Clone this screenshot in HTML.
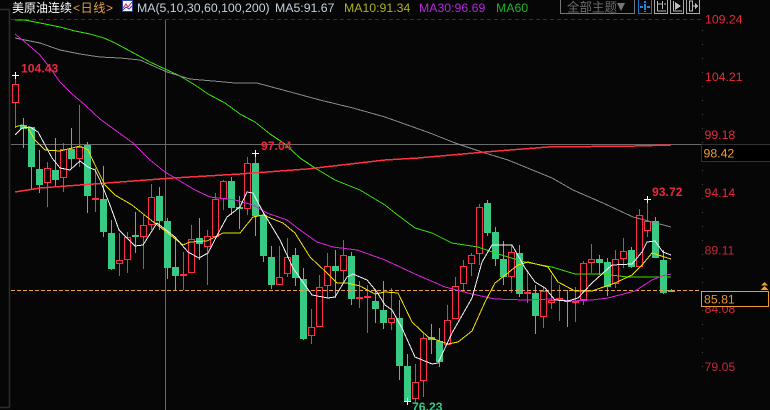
<!DOCTYPE html>
<html><head><meta charset="utf-8"><style>
html,body{margin:0;padding:0;background:#060606;width:770px;height:410px;overflow:hidden}
svg{display:block;font-family:"Liberation Sans","Noto Sans CJK SC",sans-serif}
</style></head><body>
<svg width="770" height="410" viewBox="0 0 770 410" xmlns="http://www.w3.org/2000/svg">
<rect width="770" height="410" fill="#060606"/>
<path d="M0 9.5H9.5V407M0 407.5H10" fill="none" stroke="#2c2c2c" stroke-width="1.6"/>
<path d="M11 19.5H702" stroke="#333" stroke-width="1" stroke-dasharray="4 3" shape-rendering="crispEdges"/>
<g shape-rendering="crispEdges">
<path d="M165.5 20V410" stroke="#666" stroke-width="1"/>
<path d="M11 144.5H701" stroke="#6a6a6a" stroke-width="1"/>
<!-- green wicks -->
<path fill="none" stroke="#38c985" stroke-width="1" d="M23.5 118V148M31.5 127V189M39.5 150V193M55.5 138V187M71.5 128V168M87.5 142V213M103.5 166V237M111.5 220V270M135.5 212V253M159.5 187V230M167.5 218V279M175.5 238V290M199.5 218V260M231.5 177V215M239.5 196V229M255.5 153V236M263.5 212V262M271.5 246V289M295.5 248V286M303.5 268V340M335.5 250V298M351.5 252V305M375.5 290V323M383.5 281V329M399.5 300V380M407.5 354V401M431.5 324V354M439.5 328V367M487.5 200V236M495.5 227V266M503.5 241V285M519.5 245V297M535.5 285V334M567.5 290V327M599.5 255V275M607.5 258V296M631.5 247V268M655.5 217V258M663.5 250V294M671.5 289V292"/>
<!-- green bodies -->
<path fill="#38c985" d="M20 125h7v4h-7zM28 127h7v40h-7zM36 169h7v16h-7zM52 170h7v10h-7zM68 149h7v10h-7zM84 145h7v51h-7zM100 199h7v33h-7zM108 233h7v36h-7zM132 235h7v2h-7zM156 196h7v25h-7zM164 221h7v47h-7zM172 267h7v9h-7zM196 238h7v6h-7zM228 181h7v27h-7zM236 207h7v2h-7zM252 163h7v53h-7zM260 215h7v41h-7zM268 257h7v28h-7zM292 255h7v23h-7zM300 279h7v60h-7zM332 266h7v5h-7zM348 256h7v43h-7zM372 301h7v8h-7zM380 310h7v13h-7zM396 318h7v48h-7zM404 366h7v35h-7zM428 337h7v3h-7zM436 341h7v21h-7zM484 203h7v30h-7zM492 232h7v27h-7zM500 259h7v18h-7zM516 253h7v41h-7zM532 293h7v23h-7zM564 300h7v2h-7zM596 259h7v4h-7zM604 262h7v25h-7zM628 250h7v17h-7zM652 221h7v37h-7zM660 260h7v33h-7zM668 290h7v2h-7z"/>
<!-- red wicks -->
<path fill="none" stroke="#ff2d4c" stroke-width="1" d="M15.5 75V84M15.5 103V128M47.5 162V168M47.5 183V207M63.5 143V149M63.5 178V192M79.5 105V147M79.5 159V167M95.5 168V212M119.5 233V260M119.5 264V276M127.5 232V237M127.5 260V273M143.5 215V225M143.5 237V269M151.5 184V197M151.5 225V230M183.5 252V290M191.5 225V239M207.5 230V236M207.5 247V285M215.5 193V199M223.5 180V181M223.5 199V210M247.5 157V163M247.5 209V215M279.5 246V277M287.5 238V257M287.5 274V277M311.5 309V327M311.5 336V344M319.5 275V287M327.5 253V266M327.5 286V298M343.5 240V255M343.5 271V283M359.5 281V308M367.5 285V296M367.5 298V333M391.5 288V318M391.5 323V330M415.5 364V382M415.5 399V403M423.5 332V338M423.5 381V397M447.5 305V320M455.5 277V286M463.5 260V266M463.5 284V290M471.5 253V255M471.5 264V276M479.5 204V207M479.5 254V265M511.5 245V252M511.5 277V293M527.5 270V303M543.5 287V291M543.5 317V328M551.5 275V300M551.5 303V309M559.5 285V321M575.5 287V322M583.5 261V263M583.5 300V305M591.5 244V259M591.5 263V273M615.5 250V259M615.5 284V288M623.5 238V251M623.5 259V268M639.5 209V215M647.5 199V221M647.5 231V237"/>
<!-- red bodies -->
<path fill="#060606" stroke="#ff2d4c" stroke-width="1" d="M12.5 84.5h6v18h-6zM44.5 168.5h6v14h-6zM60.5 149.5h6v28h-6zM76.5 147.5h6v11h-6zM116.5 260.5h6v3h-6zM124.5 237.5h6v22h-6zM140.5 225.5h6v11h-6zM148.5 197.5h6v27h-6zM188.5 239.5h6v33h-6zM204.5 236.5h6v10h-6zM212.5 199.5h6v37h-6zM220.5 181.5h6v17h-6zM244.5 163.5h6v45h-6zM276.5 277.5h6v7h-6zM284.5 257.5h6v16h-6zM308.5 327.5h6v8h-6zM316.5 287.5h6v39h-6zM324.5 266.5h6v19h-6zM340.5 255.5h6v15h-6zM364.5 296.5h6v1h-6zM388.5 318.5h6v4h-6zM412.5 382.5h6v16h-6zM420.5 338.5h6v42h-6zM444.5 320.5h6v24h-6zM452.5 286.5h6v32h-6zM460.5 266.5h6v17h-6zM468.5 255.5h6v8h-6zM476.5 207.5h6v46h-6zM508.5 252.5h6v24h-6zM540.5 291.5h6v25h-6zM548.5 300.5h6v2h-6zM580.5 263.5h6v36h-6zM588.5 259.5h6v3h-6zM612.5 259.5h6v24h-6zM620.5 251.5h6v7h-6zM636.5 215.5h6v51h-6zM644.5 221.5h6v9h-6z"/>
<!-- red dojis -->
<path fill="#ff2d4c" d="M92 198h7v2h-7zM180 274h7v2h-7zM356 297h7v2h-7zM524 292h7v2h-7zM556 298h7v2h-7zM572 301h7v2h-7z"/>
<!-- dashed price line -->
<path d="M11 290.5H701" stroke="#e8a24a" stroke-width="1" stroke-dasharray="4 2"/>
</g>
<!-- MA lines -->
<g fill="none" stroke-linejoin="round" shape-rendering="crispEdges">
<polyline stroke="#35e000" stroke-width="1" points="15,20 25,20 45,24 60,27 75,31 90,34 104,38 115,43 130,51 150,62 165,69 180,76 195,85 208,94 225,103 240,114 255,122 270,134 285,144 300,158 315,168 335,180 360,190 375,199 385,205 395,213 415,228 432,233 452,243 478,247 498,254 525,262 552,267 575,274 602,274 628,277 652,277 671,277"/>
<polyline stroke="#8a8a8a" stroke-width="1" points="15,38 25,40 40,43 60,50 80,54 100,57 120,58 140,60 167,72 190,79 213,81 235,83 257,83 283,90 320,100 353,108 385,117 430,133 455,143 485,153 508,160 552,178 573,190 603,203 633,217 671,227"/>
<polyline stroke="#e020e0" stroke-width="1" points="15,34 25,42 40,55 50,68 60,82 72,94 85,105 100,119 115,130 133,143 150,160 165,172 175,178 195,190 210,197 235,200 253,205 267,213 287,220 300,230 317,242 333,247 357,250 385,260 415,274 445,287 472,294 495,299 525,300 552,299 572,301 592,300 608,298 635,291 652,280 662,276 671,274"/>
<polyline stroke="#ff3040" stroke-width="1.5" points="15,192 40,188 107,183 173,178 240,174 307,169 385,160 418,158 485,152 548,147 635,146 671,145"/>
<polyline stroke="#f0e000" stroke-width="1" points="15,127 22,125 28,128 35,140 45,150 60,151 80,146 88,150 95,165 105,185 115,195 132,205 147,217 160,227 183,245 190,242 207,241 223,233 240,233 253,217 263,215 283,223 295,233 310,257 327,273 337,283 347,283 360,286 375,294 385,292 398,293 412,322 428,337 448,344 458,342 472,331 485,302 495,283 518,265 528,262 548,267 558,282 575,291 592,291 615,283 632,275 642,265 652,253 671,259"/>
<polyline stroke="#f4f4f4" stroke-width="1" points="15,135 22,128 30,127 38,132 45,145 52,158 60,168 70,170 80,161 88,167 95,170 100,180 104,190 110,205 119,230 135,246 143,245 157,223 175,237 188,252 199,258 208,253 220,230 227,217 240,207 247,192 253,193 263,212 280,240 293,268 312,295 328,298 335,297 347,277 353,274 367,280 377,292 385,305 392,310 402,328 415,357 432,364 438,363 452,333 472,298 482,262 492,245 512,245 525,268 535,282 545,288 555,300 568,301 578,298 592,283 612,265 632,264 642,252 647,242 655,241 663,252 671,255"/>
</g>
<!-- crosses -->
<path shape-rendering="crispEdges" fill="none" stroke="#fff" stroke-width="1" d="M12 75.5h7M15.5 72v7M252 153.5h7M255.5 150v7M644 199.5h7M647.5 196v7M404 401.5h7M407.5 398v7"/>
<!-- chart labels -->
<g font-size="12.2" fill="#e8283f" font-weight="bold">
<text x="21" y="72.5">104.43</text>
<text x="261" y="150">97.04</text>
<text x="652" y="196">93.72</text>
</g>
<text x="412" y="411" font-size="12.2" fill="#38c985" font-weight="bold">76.23</text>
<!-- axis ticks -->
<path stroke="#444" stroke-width="1" stroke-dasharray="1 13" d="M702.5 30V380"/>
<!-- axis labels -->
<g font-size="12.3" fill="#e8283f">
<text x="705" y="23.5">109.24</text>
<text x="705" y="81">104.21</text>
<text x="704.5" y="139">99.18</text>
<text x="704.5" y="197">94.14</text>
<text x="704.5" y="254.5" fill="#c8253c">89.11</text>
<text x="704.5" y="313" fill="#d42840">84.08</text>
<text x="704.5" y="371" fill="#c8253c">79.05</text>
</g>
<rect x="701.5" y="144.5" width="69" height="17" fill="#000" stroke="#333"/>
<text x="703.5" y="157.5" font-size="12.3" fill="#f0a030">98.42</text>
<rect x="701.5" y="291.5" width="67" height="15" fill="#000" stroke="#f09a30"/>
<text x="704" y="303.5" font-size="12.3" fill="#e8952f">85.81</text>
<path fill="#f0a030" d="M764.5 282l3.5 3.5h-7zM764.5 286l4 4h-8z"/>
<!-- header -->
<text x="12" y="12" font-size="12" fill="#ffffff">美原油连续</text>
<text x="73" y="12" font-size="12" fill="#e6a04a" textLength="40">&lt;日线&gt;</text>
<rect x="122.5" y="0.5" width="10" height="11" fill="#f4f6ff" stroke="#2840a0"/>
<path d="M123 8l3-4 2 3 4-5" fill="none" stroke="#e02030" stroke-width="1"/>
<path d="M123 10l3-3 3 2 3-3" fill="none" stroke="#2040c0" stroke-width="1"/>
<g font-size="12.3">
<text x="137" y="12" fill="#c4d0e0">MA(5,10,30,60,100,200)</text>
<text x="275" y="12" fill="#c4d0e0">MA5:91.67</text>
<text x="344" y="12" fill="#b0b020">MA10:91.34</text>
<text x="419" y="12" fill="#b428d8">MA30:96.69</text>
<text x="496" y="12" fill="#18b828">MA60</text>
</g>
<!-- top buttons -->
<g shape-rendering="crispEdges">
<rect x="560.5" y="-2" width="74" height="15.5" fill="none" stroke="#777"/>
<rect x="638.5" y="-2" width="13" height="15.5" fill="none" stroke="#1a78c8"/>
<rect x="654.5" y="-2" width="13" height="15.5" fill="none" stroke="#aaa"/>
<rect x="670.5" y="-2" width="13" height="15.5" fill="none" stroke="#aaa"/>
<rect x="686.5" y="-2" width="13" height="15.5" fill="none" stroke="#aaa"/>
<path fill="#1a8ae8" d="M644 1h2v2h-2zM644 4h2v2h-2zM644 8h2v2h-2zM644 11h2v1h-2zM640 6h3v2h-3zM647 6h3v2h-3zM644 6h2v2h-2z"/>
<path fill="none" stroke="#bbb" d="M657.5 1V11H666M658 4h4M662.5 1v8M664 4h2"/>
<path fill="none" stroke="#bbb" d="M673.5 1V11H682"/>
<path fill="#bbb" d="M675 2l6 4-6 4z"/>
<path fill="none" stroke="#bbb" d="M689.5 1V11h3V1zM693 6h3"/>
<path fill="#bbb" d="M695 3l3 3-3 3z"/>
</g>
<text x="567" y="11.5" font-size="12.5" fill="#6a6a6a" textLength="50">全部主题</text>
<path fill="#777" d="M617 3h8l-4 8z"/>
</svg>
</body></html>
